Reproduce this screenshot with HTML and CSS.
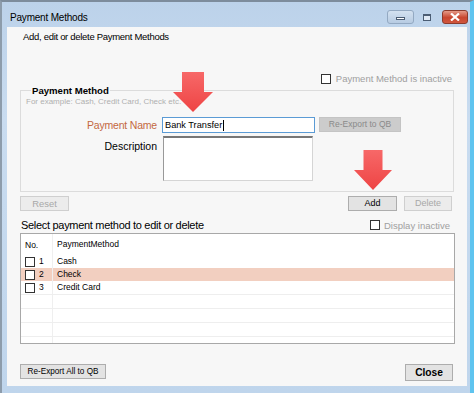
FILE: index.html
```html
<!DOCTYPE html>
<html lang="en">
<head>
    <meta charset="UTF-8">
    <title>Payment Methods</title>
    <link rel="stylesheet" href="styles.css">
</head>
<body>
<div class="window">
    <div class="titlebar">
        <span class="title">Payment Methods</span>
        <div class="caption-btns">
            <span class="cap-btn cap-min"><i></i></span>
            <span class="cap-btn cap-max"><i></i></span>
            <span class="cap-btn cap-close">
                <svg width="10" height="8" viewBox="0 0 10 8"><path d="M1 0.5 L9 7.5 M9 0.5 L1 7.5" stroke="#fff" stroke-width="2.2"/></svg>
            </span>
        </div>
    </div>

    <div class="client">
        <p class="intro">Add, edit or delete Payment Methods</p>

        <div class="inactive-row">
            <span class="check"></span>
            <span class="check-label muted">Payment Method is inactive</span>
        </div>

        <fieldset class="group">
            <legend>Payment Method</legend>
            <p class="hint">For example: Cash, Credit Card, Check etc.</p>
            <div class="form-grid">
                <label class="field-label name-label" for="pmName">Payment Name</label>
                <div class="name-input" id="pmName">Bank Transfer<span class="caret"></span></div>
                <button class="btn btn-off btn-reexport">Re-Export to QB</button>

                <label class="field-label desc-label">Description</label>
                <div class="desc-box"></div>
            </div>
        </fieldset>

        <div class="actions">
            <button class="btn btn-disabled btn-reset">Reset</button>
            <div class="actions-right">
                <button class="btn btn-add">Add</button>
                <button class="btn btn-disabled btn-delete">Delete</button>
            </div>
        </div>

        <div class="select-row">
            <span class="select-label">Select payment method to edit or delete</span>
            <div class="display-inactive">
                <span class="check"></span>
                <span class="check-label muted">Display inactive</span>
            </div>
        </div>

        <div class="grid">
            <div class="grid-row grid-head">
                <div class="col-no">No.</div>
                <div class="col-name">PaymentMethod</div>
            </div>
            <div class="grid-row">
                <div class="col-no"><span class="check"></span>1</div>
                <div class="col-name">Cash</div>
            </div>
            <div class="grid-row selected">
                <div class="col-no"><span class="check"></span>2</div>
                <div class="col-name">Check</div>
            </div>
            <div class="grid-row">
                <div class="col-no"><span class="check"></span>3</div>
                <div class="col-name">Credit Card</div>
            </div>
            <div class="grid-row empty"><div class="col-no"></div><div class="col-name"></div></div>
            <div class="grid-row empty"><div class="col-no"></div><div class="col-name"></div></div>
            <div class="grid-row empty"><div class="col-no"></div><div class="col-name"></div></div>
            <div class="grid-row empty last"><div class="col-no"></div><div class="col-name"></div></div>
        </div>

        <div class="footer">
            <button class="btn btn-reexport-all">Re-Export All to QB</button>
            <button class="btn btn-close">Close</button>
        </div>
    </div>

    <!-- callout arrows from the help screenshot -->
    <svg class="arrow arrow-name" width="40" height="40" viewBox="0 0 40 40">
        <defs>
            <linearGradient id="arrowFill" x1="0" y1="0" x2="0" y2="1">
                <stop offset="0" stop-color="#f76868"/>
                <stop offset="1" stop-color="#ee4444"/>
            </linearGradient>
        </defs>
        <path d="M9 0 H31 V20 H40 L20 40 L0 20 H9 Z" fill="url(#arrowFill)"/>
    </svg>
    <svg class="arrow arrow-add" width="38" height="40" viewBox="0 0 40 40" preserveAspectRatio="none">
        <path d="M10 0 H30 V20 H40 L20 40 L0 20 H10 Z" fill="url(#arrowFill)"/>
    </svg>
</div>
</body>
</html>
```

FILE: styles.css
```css
* {
    margin: 0;
    padding: 0;
    box-sizing: border-box;
}

body {
    width: 474px;
    height: 393px;
    overflow: hidden;
    font-family: "Liberation Sans", Arial, sans-serif;
    font-size: 9px;
    color: #000;
    background: #fff;
}

.window {
    position: relative;
    width: 474px;
    height: 393px;
    display: flex;
    flex-direction: column;
    background: linear-gradient(180deg, #bcd2ea, #c9dcf0 30%, #bfd5ec);
    border-top: 2px solid #7d8c9c;
    border-left: 2px solid #8d9cab;
    border-right: 4px solid #5fc4ef;
    padding: 0 3px 7px 5px;
}

/* title bar */
.titlebar {
    height: 25px;
    display: flex;
    align-items: flex-start;
    justify-content: space-between;
}

.title {
    margin: 9px 0 0 3px;
    font-size: 10px;
    letter-spacing: -0.2px;
    line-height: 13px;
}

.caption-btns {
    display: flex;
    margin-top: 8px;
    margin-right: -1px;
}

.cap-btn {
    height: 14px;
    display: flex;
    align-items: center;
    justify-content: center;
    border: 1px solid #93a9c2;
    border-radius: 3px;
}

.cap-min {
    width: 27px;
    background: linear-gradient(180deg, #d3e1f0, #b7cbe2);
}

.cap-min i {
    width: 9px;
    height: 3px;
    margin-top: 3px;
    border: 1px solid #4b5d74;
    background: #fff;
}

.cap-max {
    width: 24px;
    margin-left: 1px;
    background: transparent;
    border-color: transparent;
}

.cap-max i {
    width: 8px;
    height: 7px;
    border: 1px solid #4b5d74;
    border-top-width: 2px;
    background: #dfe9f5;
}

.cap-close {
    width: 26px;
    margin-left: 3px;
    background: linear-gradient(180deg, #e59a88, #c9462f 55%, #d0563e);
    border-color: #8c3a2c;
}

/* client area */
.client {
    flex: 1;
    background: #f7f7f7;
    padding: 0 13px;
    display: flex;
    flex-direction: column;
}

.intro {
    margin: 3px 0 0 3px;
    font-size: 9.5px;
    letter-spacing: -0.3px;
    line-height: 13px;
}

.muted {
    color: #a0a0a0;
}

.check {
    display: inline-block;
    width: 10px;
    height: 10px;
    border: 1px solid #333;
    background: #fff;
    flex: none;
}

.inactive-row {
    margin-top: 30px;
    height: 11px;
    display: flex;
    align-items: center;
    justify-content: flex-end;
    padding-right: 2px;
    gap: 5px;
}

.check-label {
    font-size: 9.5px;
    line-height: 11px;
}

/* group box */
.group {
    margin-top: 0;
    border: 1px solid #dcdcdc;
    padding: 0 0 10px 5px;
    min-width: 0;
}

.group legend {
    margin-left: 5px;
    padding: 0 1px;
    font-weight: bold;
    font-size: 9.6px;
    line-height: 13px;
}

.hint {
    font-size: 8px;
    line-height: 9px;
    color: #b0b0b0;
}

.form-grid {
    margin-top: 11px;
    display: grid;
    grid-template-columns: 131px 153px 82px;
    column-gap: 5px;
    row-gap: 3px;
    align-items: start;
}

.field-label {
    text-align: right;
    font-size: 10.5px;
    line-height: 16px;
}

.name-label {
    color: #c4683f;
    letter-spacing: -0.2px;
}

.desc-label {
    line-height: 20px;
}

.name-input {
    height: 16px;
    border: 1px solid #5b9bd5;
    background: #fff;
    padding-left: 2px;
    font-size: 9.2px;
    line-height: 14px;
    display: flex;
    align-items: center;
}

.caret {
    width: 1px;
    height: 11px;
    margin-left: 1px;
    background: #000;
}

.desc-box {
    width: 150px;
    margin-left: 1px;
    height: 45px;
    background: #fff;
    border: 1px solid #d5d5d5;
    border-top: 2px solid #777;
    border-left-color: #999;
}

/* buttons */
.btn {
    font-family: inherit;
    font-size: 9px;
    line-height: 13px;
    height: 15px;
    white-space: nowrap;
    background: #e3e3e3;
    border: 1px solid #adadad;
    color: #000;
    padding: 0;
}

.btn-disabled {
    background: #ececec;
    border-color: #cfcfcf;
    color: #a8a8a8;
}

.btn-off {
    background: #cccccc;
    border-color: #c4c4c4;
    color: #8a8a8a;
    font-size: 8.5px;
}

.btn-reexport {
    width: 82px;
    margin-left: -1px;
}

.actions {
    margin-top: 4px;
    display: flex;
    justify-content: space-between;
    padding-right: 2px;
}

.actions-right {
    display: flex;
    gap: 7px;
}

.btn-reset {
    width: 49px;
    font-size: 9.4px;
}

.btn-add {
    width: 49px;
}

.btn-delete {
    width: 48px;
}

.select-row {
    margin-top: 6px;
    height: 16px;
    display: flex;
    align-items: center;
    justify-content: space-between;
    padding-right: 4px;
}

.select-label {
    padding-left: 1px;
    font-size: 11px;
    letter-spacing: -0.3px;
}

.display-inactive {
    display: flex;
    align-items: center;
    gap: 4px;
}

/* list */
.grid {
    height: 111px;
    margin-right: -1px;
    border: 1px solid #a8a8a8;
    background: #fff;
    overflow: hidden;
}

.grid-row {
    display: flex;
    height: 13px;
    font-size: 8.5px;
    line-height: 13px;
}

.grid-head {
    height: 21px;
    line-height: 20px;
}

.grid-row.selected {
    background: #f2cfc0;
}

.grid-row.empty {
    height: 14px;
    border-top: 1px solid #eeeeee;
}

.grid-row.empty.last {
    height: 9px;
}

.col-no {
    width: 32px;
    padding-left: 4px;
    display: flex;
    align-items: center;
    gap: 4px;
    border-right: 1px solid #efefef;
}

.col-name {
    flex: 1;
    padding-left: 4px;
}

.footer {
    margin-top: 20px;
    display: flex;
    justify-content: space-between;
    align-items: flex-start;
    padding-right: 1px;
}

.btn-reexport-all {
    width: 86px;
    font-size: 8.2px;
}

.btn-close {
    width: 48px;
    height: 17px;
    font-weight: bold;
    font-size: 10.2px;
}

/* callouts */
.arrow {
    position: absolute;
}

.arrow-name {
    left: 171px;
    top: 70px;
}

.arrow-add {
    left: 352px;
    top: 148px;
}
```
